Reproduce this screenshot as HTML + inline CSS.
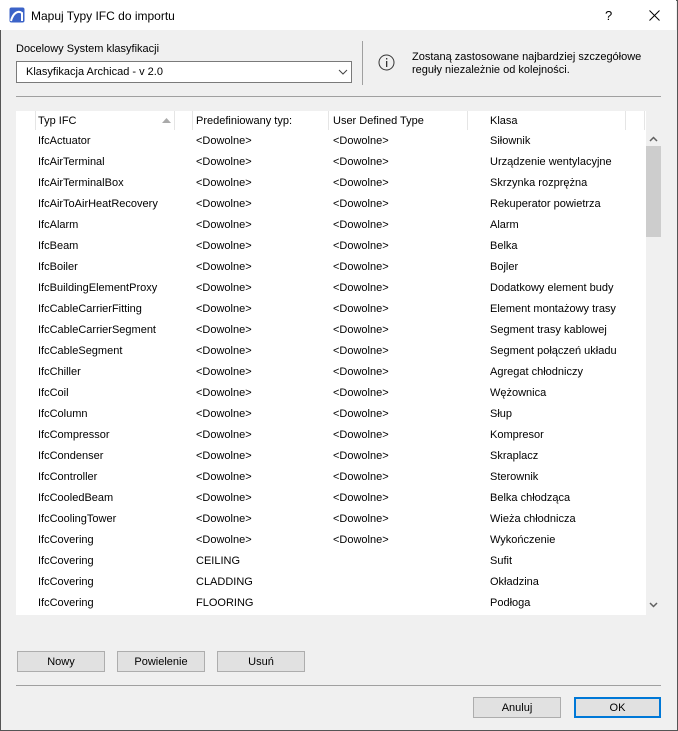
<!DOCTYPE html>
<html><head><meta charset="utf-8"><style>
*{box-sizing:border-box;margin:0;padding:0}
body{width:678px;height:731px;overflow:hidden;background:#f0f0f0;font-family:"Liberation Sans",sans-serif;font-size:11px;color:#000;position:relative}
.win{position:absolute;left:0;top:0;width:678px;height:731px;border:1px solid #555}
.title{position:absolute;left:0;top:0;width:676px;height:30px;background:#fff}
.abs{position:absolute;white-space:nowrap}
.btn{position:absolute;height:21px;background:#e1e1e1;border:1px solid #adadad;text-align:center;line-height:21px}
.list{position:absolute;left:16px;top:111px;width:630px;height:504px;background:#fff}
.hdr{position:absolute;top:1px;height:19px;line-height:19px}
.sep{position:absolute;top:0;width:1px;height:19px;background:#e5e5e5}
.row{position:absolute;left:0;width:630px;height:21px;line-height:23px}
.row span{position:absolute}
</style></head><body>
<div class="win"></div>
<div class="title">
<svg class="abs" style="left:9px;top:7px" width="16" height="16" viewBox="0 0 16 16"><rect x="0.5" y="0.5" width="15" height="15" rx="2" fill="#3b63c8"/><path d="M2 14 C4 6 9 3 13 6 L13 14" stroke="#fff" stroke-width="2" fill="none"/></svg>
<div class="abs" style="left:31px;top:9px;font-size:12px">Mapuj Typy IFC do importu</div>
<div class="abs" style="left:605px;top:8px;font-size:13px">?</div>
<svg class="abs" style="left:649px;top:10px" width="11" height="11"><path d="M0.5 0.5L10.5 10.5M10.5 0.5L0.5 10.5" stroke="#000" stroke-width="1"/></svg>
</div>
<div class="abs" style="left:16px;top:43px">Docelowy System klasyfikacji</div>
<div class="abs" style="left:16px;top:61px;width:336px;height:22px;background:#fff;border:1px solid #7a7a7a;line-height:21px;padding-left:9px">Klasyfikacja Archicad - v 2.0<svg class="abs" style="left:321px;top:7px" width="10" height="6"><path d="M1 1l4 4 4-4" stroke="#444" fill="none"/></svg></div>
<div class="abs" style="left:362px;top:41px;width:1px;height:44px;background:#a0a0a0"></div>
<svg class="abs" style="left:378px;top:54px" width="17" height="17"><circle cx="8.5" cy="8.5" r="7.5" stroke="#333" fill="none"/><rect x="8" y="7" width="1.3" height="6" fill="#333"/><rect x="8" y="4" width="1.3" height="1.5" fill="#333"/></svg>
<div class="abs" style="left:412px;top:51px;line-height:13px">Zostaną zastosowane najbardziej szczegółowe<br>reguły niezależnie od kolejności.</div>
<div class="abs" style="left:16px;top:96px;width:645px;height:1px;background:#a0a0a0"></div>
<div class="list">
<div class="hdr" style="left:22px">Typ IFC</div>
<svg class="abs" style="left:146px;top:7px" width="9" height="5"><path d="M0 5L4.5 0 9 5z" fill="#aaa"/></svg>
<div class="sep" style="left:19px"></div><div class="sep" style="left:158px"></div><div class="sep" style="left:176px"></div><div class="sep" style="left:312px"></div><div class="sep" style="left:451px"></div><div class="sep" style="left:609px"></div><div class="sep" style="left:628px"></div>
<div class="hdr" style="left:180px">Predefiniowany typ:</div>
<div class="hdr" style="left:317px">User Defined Type</div>
<div class="hdr" style="left:474px">Klasa</div>
</div>
<div class="abs" style="left:646px;top:130px;width:15px;height:485px;background:#f0f0f0"></div>
<div class="abs" style="left:646px;top:146px;width:15px;height:91px;background:#cdcdcd"></div>
<svg class="abs" style="left:649px;top:136px" width="9" height="6"><path d="M1 5l3.5-3.5L8 5" stroke="#606060" stroke-width="1.5" fill="none"/></svg>
<svg class="abs" style="left:649px;top:602px" width="9" height="6"><path d="M1 1l3.5 3.5L8 1" stroke="#606060" stroke-width="1.5" fill="none"/></svg>
<div class="btn" style="left:17px;top:651px;width:88px">Nowy</div>
<div class="btn" style="left:117px;top:651px;width:88px">Powielenie</div>
<div class="btn" style="left:217px;top:651px;width:88px">Usuń</div>
<div class="abs" style="left:16px;top:685px;width:645px;height:1px;background:#a0a0a0"></div>
<div class="btn" style="left:473px;top:697px;width:88px">Anuluj</div>
<div class="btn" style="left:574px;top:697px;width:87px;border:2px solid #0078d7;line-height:19px">OK</div>
<div class="list" style="background:none;pointer-events:none">
<div class="row" style="top:19px"><span style="left:22px">IfcActuator</span><span style="left:180px">&lt;Dowolne&gt;</span><span style="left:317px">&lt;Dowolne&gt;</span><span style="left:474px">Siłownik</span></div>
<div class="row" style="top:40px"><span style="left:22px">IfcAirTerminal</span><span style="left:180px">&lt;Dowolne&gt;</span><span style="left:317px">&lt;Dowolne&gt;</span><span style="left:474px">Urządzenie wentylacyjne</span></div>
<div class="row" style="top:61px"><span style="left:22px">IfcAirTerminalBox</span><span style="left:180px">&lt;Dowolne&gt;</span><span style="left:317px">&lt;Dowolne&gt;</span><span style="left:474px">Skrzynka rozprężna</span></div>
<div class="row" style="top:82px"><span style="left:22px">IfcAirToAirHeatRecovery</span><span style="left:180px">&lt;Dowolne&gt;</span><span style="left:317px">&lt;Dowolne&gt;</span><span style="left:474px">Rekuperator powietrza</span></div>
<div class="row" style="top:103px"><span style="left:22px">IfcAlarm</span><span style="left:180px">&lt;Dowolne&gt;</span><span style="left:317px">&lt;Dowolne&gt;</span><span style="left:474px">Alarm</span></div>
<div class="row" style="top:124px"><span style="left:22px">IfcBeam</span><span style="left:180px">&lt;Dowolne&gt;</span><span style="left:317px">&lt;Dowolne&gt;</span><span style="left:474px">Belka</span></div>
<div class="row" style="top:145px"><span style="left:22px">IfcBoiler</span><span style="left:180px">&lt;Dowolne&gt;</span><span style="left:317px">&lt;Dowolne&gt;</span><span style="left:474px">Bojler</span></div>
<div class="row" style="top:166px"><span style="left:22px">IfcBuildingElementProxy</span><span style="left:180px">&lt;Dowolne&gt;</span><span style="left:317px">&lt;Dowolne&gt;</span><span style="left:474px">Dodatkowy element budy</span></div>
<div class="row" style="top:187px"><span style="left:22px">IfcCableCarrierFitting</span><span style="left:180px">&lt;Dowolne&gt;</span><span style="left:317px">&lt;Dowolne&gt;</span><span style="left:474px">Element montażowy trasy</span></div>
<div class="row" style="top:208px"><span style="left:22px">IfcCableCarrierSegment</span><span style="left:180px">&lt;Dowolne&gt;</span><span style="left:317px">&lt;Dowolne&gt;</span><span style="left:474px">Segment trasy kablowej</span></div>
<div class="row" style="top:229px"><span style="left:22px">IfcCableSegment</span><span style="left:180px">&lt;Dowolne&gt;</span><span style="left:317px">&lt;Dowolne&gt;</span><span style="left:474px">Segment połączeń układu</span></div>
<div class="row" style="top:250px"><span style="left:22px">IfcChiller</span><span style="left:180px">&lt;Dowolne&gt;</span><span style="left:317px">&lt;Dowolne&gt;</span><span style="left:474px">Agregat chłodniczy</span></div>
<div class="row" style="top:271px"><span style="left:22px">IfcCoil</span><span style="left:180px">&lt;Dowolne&gt;</span><span style="left:317px">&lt;Dowolne&gt;</span><span style="left:474px">Wężownica</span></div>
<div class="row" style="top:292px"><span style="left:22px">IfcColumn</span><span style="left:180px">&lt;Dowolne&gt;</span><span style="left:317px">&lt;Dowolne&gt;</span><span style="left:474px">Słup</span></div>
<div class="row" style="top:313px"><span style="left:22px">IfcCompressor</span><span style="left:180px">&lt;Dowolne&gt;</span><span style="left:317px">&lt;Dowolne&gt;</span><span style="left:474px">Kompresor</span></div>
<div class="row" style="top:334px"><span style="left:22px">IfcCondenser</span><span style="left:180px">&lt;Dowolne&gt;</span><span style="left:317px">&lt;Dowolne&gt;</span><span style="left:474px">Skraplacz</span></div>
<div class="row" style="top:355px"><span style="left:22px">IfcController</span><span style="left:180px">&lt;Dowolne&gt;</span><span style="left:317px">&lt;Dowolne&gt;</span><span style="left:474px">Sterownik</span></div>
<div class="row" style="top:376px"><span style="left:22px">IfcCooledBeam</span><span style="left:180px">&lt;Dowolne&gt;</span><span style="left:317px">&lt;Dowolne&gt;</span><span style="left:474px">Belka chłodząca</span></div>
<div class="row" style="top:397px"><span style="left:22px">IfcCoolingTower</span><span style="left:180px">&lt;Dowolne&gt;</span><span style="left:317px">&lt;Dowolne&gt;</span><span style="left:474px">Wieża chłodnicza</span></div>
<div class="row" style="top:418px"><span style="left:22px">IfcCovering</span><span style="left:180px">&lt;Dowolne&gt;</span><span style="left:317px">&lt;Dowolne&gt;</span><span style="left:474px">Wykończenie</span></div>
<div class="row" style="top:439px"><span style="left:22px">IfcCovering</span><span style="left:180px">CEILING</span><span style="left:474px">Sufit</span></div>
<div class="row" style="top:460px"><span style="left:22px">IfcCovering</span><span style="left:180px">CLADDING</span><span style="left:474px">Okładzina</span></div>
<div class="row" style="top:481px"><span style="left:22px">IfcCovering</span><span style="left:180px">FLOORING</span><span style="left:474px">Podłoga</span></div>
</div>
</body></html>
